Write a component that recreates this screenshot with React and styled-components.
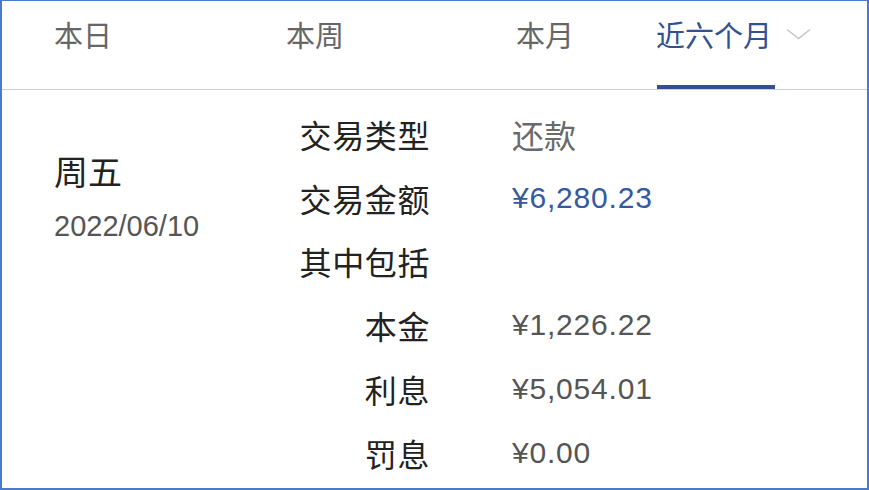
import { createGlobalStyle, styled } from "styled-components";

const GlobalStyle = createGlobalStyle`
  html, body {
    margin: 0;
    padding: 0;
    background: #ffffff;
  }
  body {
    font-family: "Liberation Sans", "Noto Sans CJK SC", sans-serif;
  }
`;

const tabs = [
  { label: "本日", width: 232 },
  { label: "本周", width: 230 },
  { label: "本月", width: 140 },
  { label: "近六个月", active: true, dropdown: true },
];

const details = [
  { label: "交易类型", value: "还款", kind: "text" },
  { label: "交易金额", value: "¥6,280.23", kind: "accent" },
  { label: "其中包括" },
  { label: "本金", value: "¥1,226.22" },
  { label: "利息", value: "¥5,054.01" },
  { label: "罚息", value: "¥0.00" },
];

function Chevron() {
  return (
    <svg width="25" height="12" viewBox="0 0 25 12" fill="none">
      <path d="M1 1.5 L12.5 10.5 L24 1.5" stroke="#c4c4c4" strokeWidth="1.4" />
    </svg>
  );
}

export default function App() {
  return (
    <>
      <GlobalStyle />
      <Frame>
        <TabBar>
          {tabs.map((t) => (
            <Tab key={t.label} $width={t.width}>
              <TabLabel $active={t.active}>
                {t.label}
                {t.active && <Underline />}
              </TabLabel>
              {t.dropdown && (
                <ChevronWrap>
                  <Chevron />
                </ChevronWrap>
              )}
            </Tab>
          ))}
        </TabBar>
        <Content>
          <DateCol>
            <Weekday>周五</Weekday>
            <DateText>2022/06/10</DateText>
          </DateCol>
          <DetailGrid>
            {details.map((d) => (
              <Row key={d.label}>
                <Label>{d.label}</Label>
                <Value $kind={d.kind}>{d.value}</Value>
              </Row>
            ))}
          </DetailGrid>
        </Content>
      </Frame>
    </>
  );
}

const Frame = styled.div`
  width: 869px;
  height: 490px;
  box-sizing: border-box;
  border: 2px solid #4b7acb;
  border-top-width: 1px;
  background: #fff;
  overflow: hidden;
`;

const TabBar = styled.div`
  display: flex;
  height: 88px;
  padding-left: 52px;
  border-bottom: 1px solid #cfcfcf;
`;

const Tab = styled.div`
  display: flex;
  align-items: flex-start;
  width: ${(p) => (p.$width ? `${p.$width}px` : "auto")};
  flex-shrink: 0;
`;

const TabLabel = styled.div`
  position: relative;
  height: 88px;
  padding-top: 13px;
  box-sizing: border-box;
  font-family: "Noto Sans CJK SC", sans-serif;
  font-size: 29px;
  line-height: 40px;
  color: ${(p) => (p.$active ? "#34518f" : "#666666")};
`;

const Underline = styled.span`
  position: absolute;
  left: 1px;
  right: -3px;
  bottom: 0;
  height: 4px;
  background: #2f4f98;
`;

const ChevronWrap = styled.div`
  margin-left: 14px;
  padding-top: 25px;
`;

const Content = styled.div`
  display: flex;
  padding: 12px 0 0 52px;
`;

const DateCol = styled.div`
  width: 243px;
  padding-top: 49px;
  display: flex;
  flex-direction: column;
`;

const Weekday = styled.div`
  font-family: "Noto Sans CJK SC", sans-serif;
  font-size: 34px;
  line-height: 40px;
  color: #222;
`;

const DateText = styled.div`
  margin-top: 17px;
  font-size: 29px;
  line-height: 36px;
  color: #555;
`;

const DetailGrid = styled.div`
  display: flex;
  flex-direction: column;
`;

const Row = styled.div`
  display: grid;
  grid-template-columns: 133px 1fr;
  column-gap: 82px;
  height: 63.8px;
  align-items: center;
`;

const Label = styled.div`
  text-align: right;
  font-family: "Noto Sans CJK SC", sans-serif;
  font-size: 32px;
  letter-spacing: 0.6px;
  line-height: 40px;
  color: #222;
`;

const Value = styled.div`
  font-family: ${(p) =>
    p.$kind === "text"
      ? `"Noto Sans CJK SC", sans-serif`
      : `"Liberation Sans", "Noto Sans CJK SC", sans-serif`};
  font-size: ${(p) => (p.$kind === "text" ? "32px" : "30px")};
  letter-spacing: ${(p) => (p.$kind === "text" ? "0" : "0.8px")};
  line-height: 40px;
  color: ${(p) => (p.$kind === "accent" ? "#34599f" : p.$kind === "text" ? "#6a6a6a" : "#555")};
`;
